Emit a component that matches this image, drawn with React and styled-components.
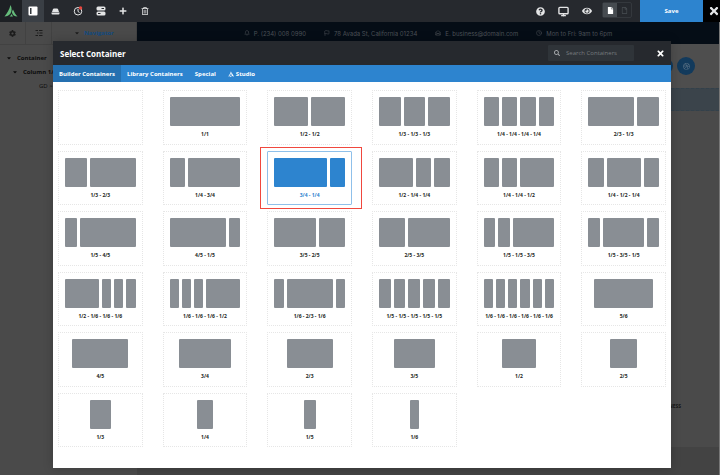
import React, { useState } from "react";
import styled, { createGlobalStyle } from "styled-components";
import {
  FaCog,
  FaPlus,
  FaEye,
  FaQuestionCircle,
  FaSearch,
  FaCaretDown,
  FaRegTrashAlt,
  FaTimes,
  FaFile,
  FaRegFile,
  FaDribbble,
  FaTwitter,
} from "react-icons/fa";
import { FiBell, FiClock, FiFlag, FiMonitor } from "react-icons/fi";
import { HiOutlineMailOpen } from "react-icons/hi";

const tabs = ["Builder Containers", "Library Containers", "Special", "Studio"];

const layouts = [
  "",
  "1/1",
  "1/2 - 1/2",
  "1/3 - 1/3 - 1/3",
  "1/4 - 1/4 - 1/4 - 1/4",
  "2/3 - 1/3",
  "1/3 - 2/3",
  "1/4 - 3/4",
  "3/4 - 1/4",
  "1/2 - 1/4 - 1/4",
  "1/4 - 1/4 - 1/2",
  "1/4 - 1/2 - 1/4",
  "1/5 - 4/5",
  "4/5 - 1/5",
  "3/5 - 2/5",
  "2/5 - 3/5",
  "1/5 - 1/5 - 3/5",
  "1/5 - 3/5 - 1/5",
  "1/2 - 1/6 - 1/6 - 1/6",
  "1/6 - 1/6 - 1/6 - 1/2",
  "1/6 - 2/3 - 1/6",
  "1/5 - 1/5 - 1/5 - 1/5 - 1/5",
  "1/6 - 1/6 - 1/6 - 1/6 - 1/6 - 1/6",
  "5/6",
  "4/5",
  "3/4",
  "2/3",
  "3/5",
  "1/2",
  "2/5",
  "1/3",
  "1/4",
  "1/5",
  "1/6",
];

const toFraction = (text) => {
  const [top, bottom] = text.split("/");
  return top / bottom;
};

const AvadaMark = ({ size }) => (
  <svg width={size} height={size} viewBox="0 0 24 24" fill="currentColor">
    <path d="M12 1C13 9 10 19 0 23C5 17 9 9 12 1Z" />
    <path d="M13 2C15 8 20 16 24 22C18 23 13 18 13 11Z" />
    <path d="M3 23C7 22 11 20 12 16L14 23Z" />
  </svg>
);

// green logo in the toolbar, two separate leaves
const BrandLogo = () => (
  <svg width="14" height="14" viewBox="0 0 28 28" fill="currentColor">
    <path d="M13 2C16 8 16 14 13 19C10 23 6 25 1 25C6 19 11 11 13 2Z" />
    <path d="M18 11C20 16 23 21 27 25C21 25 17 22 16 17C16 14 17 13 18 11Z" />
    <path d="M11 25C13 24 14 22 15 20L18 25Z" />
  </svg>
);

const PanelIcon = () => (
  <svg width="10" height="10" viewBox="0 0 10 10">
    <rect x="0.500" y="0.500" width="9" height="9" rx="1" fill="#fff" />
    <rect x="2" y="2" width="1.500" height="6" fill="#33383d" />
  </svg>
);

const DriveIcon = () => (
  <svg width="9" height="9" viewBox="0 0 18 16" fill="currentColor">
    <path d="M6 2h6q1.500 0 2 1L16 9H2l2-6Q4.500 2 6 2Z" />
    <path d="M1 10h16V12q0 2-2 2H3q-2 0-2-2Z" />
  </svg>
);

const HistoryIcon = () => (
  <svg width="10" height="10" viewBox="0 0 20 20" fill="none">
    <circle cx="10" cy="10.500" r="7.500" stroke="#e4e5e6" strokeWidth="2" />
    <path d="M10 6v5l3 2" stroke="#e4e5e6" strokeWidth="2" />
    <circle cx="15" cy="4" r="3.500" fill="#e8473f" />
  </svg>
);

const ServerIcon = () => (
  <svg width="10" height="10" viewBox="0 0 20 20" fill="currentColor">
    <rect x="1" y="1" width="18" height="8" rx="3" />
    <rect x="1" y="11" width="18" height="8" rx="3" />
    <path d="M11 5h5M4 15h5" stroke="#26292e" strokeWidth="2" />
  </svg>
);

const TreeIcon = () => (
  <svg width="8" height="8" viewBox="0 0 16 16" stroke="currentColor" strokeWidth="2">
    <path d="M1 3h5M8 3h7M4 8h3M9 8h6M1 13h5M8 13h7" />
  </svg>
);

export default function App() {
  const [tab, setTab] = useState("Builder Containers");
  const [selected, setSelected] = useState("3/4 - 1/4");

  return (
    <Page>
      <GlobalStyle />
      <Toolbar>
        <Brand href="#" aria-label="Avada">
          <BrandLogo />
        </Brand>
        <ToolButton $active aria-label="Sidebar"><PanelIcon /></ToolButton>
        <ToolButton $wide aria-label="Library"><DriveIcon /></ToolButton>
        <ToolButton aria-label="History"><HistoryIcon /></ToolButton>
        <ToolButton $wide aria-label="Options"><ServerIcon /></ToolButton>
        <ToolButton aria-label="Add"><FaPlus /></ToolButton>
        <ToolButton aria-label="Clear"><FaRegTrashAlt /></ToolButton>
        <Spacer />
        <ToolButton $wide aria-label="Help"><FaQuestionCircle size={9} /></ToolButton>
        <ToolButton $wide aria-label="Screen size"><FiMonitor size={11} strokeWidth={3} /></ToolButton>
        <ToolButton $wide aria-label="Preview"><FaEye size={10} /></ToolButton>
        <PageToggle>
          <ToggleButton $active aria-label="Published"><FaFile /></ToggleButton>
          <ToggleButton aria-label="Draft"><FaRegFile /></ToggleButton>
        </PageToggle>
        <SaveButton>Save</SaveButton>
        <ExitButton aria-label="Exit"><FaTimes /></ExitButton>
      </Toolbar>

      <Workspace>
        <Sidebar>
          <SidebarTabs>
            <SidebarTab aria-label="Settings"><FaCog /></SidebarTab>
            <SidebarTab aria-label="Structure"><TreeIcon /></SidebarTab>
            <SidebarTab $wide><FaCaretDown /> <b>Navigator</b></SidebarTab>
          </SidebarTabs>
          <Tree>
            <TreeItem $depth={0}><FaCaretDown />Container</TreeItem>
            <TreeItem $depth={1}><FaCaretDown />Column 1/1</TreeItem>
            <TreeItem $depth={5} $plain>GD &gt; S</TreeItem>
          </Tree>
        </Sidebar>
        <Site>
          <ContactBar>
            <Contact><FiBell />P. (234) 008 0990</Contact>
            <Contact><FiFlag />78 Avada St, California 01234</Contact>
            <Contact><HiOutlineMailOpen />E. business@domain.com</Contact>
            <Contact><FiClock />Mon to Fri: 9am to 6pm</Contact>
          </ContactBar>
          <SiteHeader>
            <Social href="#" aria-label="Twitter"><FaTwitter /></Social>
            <Social href="#" aria-label="Dribbble"><FaDribbble /></Social>
          </SiteHeader>
          <DropZone />
          <SiteBody>BUSINESS</SiteBody>
          <SiteFooter />
        </Site>
      </Workspace>

      <Dialog role="dialog" aria-label="Select Container">
        <DialogHeader>
          <h2>Select Container</h2>
          <Search>
            <FaSearch />
            <input type="text" placeholder="Search Containers" aria-label="Search Containers" />
          </Search>
          <CloseButton aria-label="Close"><FaTimes /></CloseButton>
        </DialogHeader>
        <Tabs>
          {tabs.map((name) => (
            <Tab key={name} $active={tab === name} onClick={() => setTab(name)}>
              {name === "Studio" && <AvadaMark size={6} />}
              {name}
            </Tab>
          ))}
        </Tabs>
        <Layouts>
          {layouts.map((name) => (
            <Cell key={name}>
              <Card
                $active={selected === name}
                aria-label={name || "Empty"}
                onClick={() => setSelected(name)}
              >
                {name && (
                  <>
                    <Bars>
                      {name.split(" - ").map((part, i) => (
                        <Bar
                          key={i}
                          $share={toFraction(part)}
                          $active={selected === name}
                        />
                      ))}
                    </Bars>
                    <span>{name}</span>
                  </>
                )}
              </Card>
              {name === "3/4 - 1/4" && <Highlight />}
            </Cell>
          ))}
        </Layouts>
      </Dialog>
    </Page>
  );
}

const GlobalStyle = createGlobalStyle`
  * {
    box-sizing: border-box;
  }
  body {
    margin: 0;
    background: #4a4a4a;
    font-family: "Open Sans", sans-serif;
    overflow: hidden;
  }
  button, input {
    font: inherit;
    color: inherit;
    border: 0;
    padding: 0;
    background: none;
  }
  button {
    cursor: pointer;
  }
  svg {
    flex-shrink: 0;
  }
`;

const Page = styled.div`
  position: relative;
  display: flex;
  flex-direction: column;
  height: 100vh;
`;

const Toolbar = styled.header`
  display: flex;
  align-items: stretch;
  height: 22px;
  flex-shrink: 0;
  background: #26292e;
  color: #e4e5e6;
  font-size: 8px;
`;

const Brand = styled.a`
  display: flex;
  align-items: center;
  justify-content: center;
  width: 22px;
  background: #1d2024;
  color: #65bc7b;
`;

const ToolButton = styled.button`
  display: flex;
  align-items: center;
  justify-content: center;
  width: ${({ $wide }) => ($wide ? "23px" : "22px")};
  background: ${({ $active }) => ($active ? "#3a3f45" : "none")};
`;

const Spacer = styled.div`
  flex: 1;
`;

const PageToggle = styled.div`
  display: flex;
  align-items: center;
  margin: 2px 8px 4px 4px;
  border: 1px solid #34383d;
  border-radius: 2px;
`;

const ToggleButton = styled.button`
  display: flex;
  align-items: center;
  justify-content: center;
  width: 14px;
  height: 100%;
  font-size: 7px;
  color: ${({ $active }) => ($active ? "#fff" : "#4a4f54")};
  background: ${({ $active }) => ($active ? "#464b50" : "none")};
`;

const SaveButton = styled.button`
  width: 63px;
  background: #2d84cf;
  color: #fff;
  font-size: 6px;
  font-weight: 700;
`;

const ExitButton = styled.button`
  display: flex;
  align-items: center;
  justify-content: flex-end;
  width: 17px;
  background: #000;
  font-size: 12px;
`;

const Workspace = styled.div`
  display: flex;
  flex: 1;
`;

const Sidebar = styled.aside`
  width: 19%;
  background: #4a4a4a;
  color: #0c0c0c;
`;

const SidebarTabs = styled.div`
  display: flex;
  height: 23px;
  border-bottom: 1px solid #424242;
`;

const SidebarTab = styled.button`
  display: flex;
  flex: ${({ $wide }) => ($wide ? "1" : "0 0 26px")};
  align-items: center;
  justify-content: center;
  gap: 4px;
  border-right: 1px solid #424242;
  font-size: ${({ $wide }) => ($wide ? "6px" : "7px")};
  color: #1c1c1c;
  b {
    color: #124a80;
  }
`;

const Tree = styled.div`
  display: flex;
  flex-direction: column;
  gap: 4px;
  padding: 8px 6px;
`;

const TreeItem = styled.div`
  display: flex;
  align-items: center;
  gap: 5px;
  height: 10px;
  padding-left: ${({ $depth }) => $depth * 6 + ($depth > 1 ? 3 : 0)}px;
  font-size: 6px;
  font-weight: ${({ $plain }) => ($plain ? 400 : 700)};
  white-space: nowrap;
`;

const Site = styled.main`
  display: flex;
  flex: 1;
  flex-direction: column;
  border-right: 1px solid #777;
`;

const ContactBar = styled.div`
  display: flex;
  align-items: center;
  justify-content: center;
  gap: 18px;
  height: 22px;
  background: #050d16;
  color: #4c5157;
  font-family: Inter, sans-serif;
  font-size: 6px;
`;

const Contact = styled.span`
  display: flex;
  align-items: center;
  gap: 4px;
  white-space: nowrap;
`;

const SiteHeader = styled.div`
  display: flex;
  align-items: center;
  justify-content: flex-end;
  gap: 4px;
  height: 44px;
  padding-right: 24px;
  background: #4e4e4e;
`;

const Social = styled.a`
  display: flex;
  align-items: center;
  justify-content: center;
  width: 18px;
  height: 18px;
  border-radius: 50%;
  background: #123a5c;
  color: #5c7285;
  font-size: 7px;
`;

const DropZone = styled.div`
  height: 23px;
  border: 1px dashed #33414b;
  border-width: 1px 0;
  background: #3b444b;
`;

const SiteBody = styled.div`
  display: flex;
  flex: 1;
  align-items: flex-end;
  justify-content: flex-end;
  padding: 0 38px 38px;
  font-size: 5px;
  font-weight: 700;
  color: #161616;
`;

const SiteFooter = styled.div`
  height: 28px;
  background: #434343;
`;

const Dialog = styled.section`
  position: absolute;
  inset: 41px 49px 7px 53px;
  display: flex;
  flex-direction: column;
  background: #fff;
  box-shadow: 0 0 10px rgba(0, 0, 0, 0.2);
`;

const DialogHeader = styled.div`
  display: flex;
  flex-shrink: 0;
  align-items: center;
  height: 24px;
  padding: 0 6px 0 7px;
  background: #26292e;
  color: #fff;
  h2 {
    flex: 1;
    margin: 0;
    font-size: 8px;
    font-weight: 700;
  }
`;

const Search = styled.label`
  display: flex;
  align-items: center;
  gap: 6px;
  width: 86px;
  height: 16px;
  padding: 0 6px;
  border-radius: 1px;
  background: #2f3439;
  color: #a5a8ab;
  font-size: 6px;
  input {
    flex: 1;
    min-width: 0;
    outline: 0;
    &::placeholder {
      color: #777b7f;
    }
  }
`;

const CloseButton = styled.button`
  display: flex;
  margin-left: 22px;
  font-size: 9px;
`;

const Tabs = styled.nav`
  display: flex;
  flex-shrink: 0;
  height: 17px;
  background: #2d84cf;
`;

const Tab = styled.button`
  display: flex;
  align-items: center;
  gap: 2px;
  padding: 0 6px;
  background: ${({ $active }) => ($active ? "#2570b0" : "none")};
  color: #fff;
  font-size: 6px;
  font-weight: 700;
`;

const Layouts = styled.div`
  display: grid;
  flex: 1;
  grid-template-columns: repeat(6, 1fr);
  grid-template-rows: repeat(6, 1fr);
  gap: 6px 20px;
  padding: 8px 5px 21px;
`;

const Cell = styled.div`
  position: relative;
  display: flex;
`;

const Highlight = styled.div`
  position: absolute;
  inset: -4px -10px -4px -7px;
  border: 1px solid #f0483e;
  pointer-events: none;
`;

const Card = styled.button`
  display: flex;
  flex: 1;
  flex-direction: column;
  align-items: center;
  gap: 5px;
  padding: 6px 6px 0;
  border: 1px ${({ $active }) => ($active ? "solid #8fc0ea" : "dotted #e6e6e6")};
  border-radius: 1px;
  color: ${({ $active }) => ($active ? "#2d84cf" : "#1b1e22")};
  font-size: 5px;
  font-weight: 700;
  line-height: 7px;
  white-space: nowrap;
`;

const Bars = styled.div`
  display: flex;
  justify-content: center;
  gap: 3px;
  width: 100%;
  height: 29px;
`;

const Bar = styled.div`
  width: calc((100% + 3px) * ${({ $share }) => $share} - 3px);
  border-radius: 1px;
  background: ${({ $active }) => ($active ? "#2d84cf" : "#898e94")};
`;
